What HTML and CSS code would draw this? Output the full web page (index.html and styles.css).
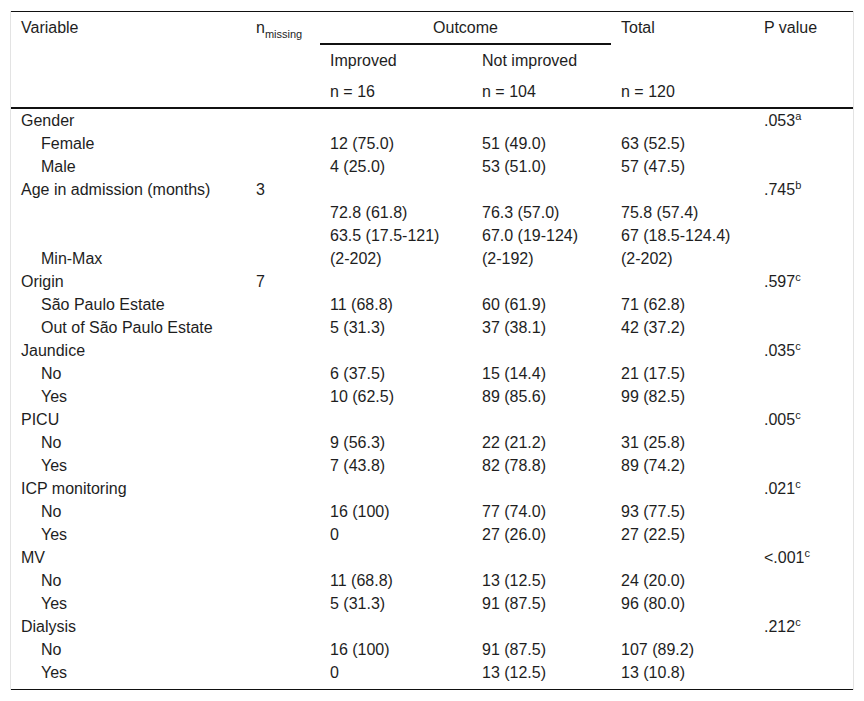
FILE: index.html
```html
<!DOCTYPE html>
<html lang="en">
<head>
<meta charset="utf-8">
<title>Table</title>
<link rel="stylesheet" href="styles.css">
</head>
<body>
<div class="wrap">
<table class="tbl">
  <colgroup>
    <col class="c-var"><col class="c-miss"><col class="c-imp"><col class="c-not"><col class="c-tot"><col class="c-p">
  </colgroup>
  <thead>
    <tr>
      <th rowspan="3">Variable</th>
      <th rowspan="3">n<sub>missing</sub></th>
      <th colspan="2" class="outcome">Outcome</th>
      <th rowspan="2">Total</th>
      <th rowspan="3">P value</th>
    </tr>
    <tr>
      <th>Improved</th>
      <th>Not improved</th>
    </tr>
    <tr class="last-head">
      <th>n = 16</th>
      <th>n = 104</th>
      <th>n = 120</th>
    </tr>
  </thead>
  <tbody>
    <tr><td>Gender</td><td></td><td></td><td></td><td></td><td>.053<sup>a</sup></td></tr>
    <tr><td class="ind">Female</td><td></td><td>12 (75.0)</td><td>51 (49.0)</td><td>63 (52.5)</td><td></td></tr>
    <tr><td class="ind">Male</td><td></td><td>4 (25.0)</td><td>53 (51.0)</td><td>57 (47.5)</td><td></td></tr>
    <tr><td>Age in admission (months)</td><td>3</td><td></td><td></td><td></td><td>.745<sup>b</sup></td></tr>
    <tr><td></td><td></td><td>72.8 (61.8)</td><td>76.3 (57.0)</td><td>75.8 (57.4)</td><td></td></tr>
    <tr><td></td><td></td><td>63.5 (17.5-121)</td><td>67.0 (19-124)</td><td>67 (18.5-124.4)</td><td></td></tr>
    <tr><td class="ind">Min-Max</td><td></td><td>(2-202)</td><td>(2-192)</td><td>(2-202)</td><td></td></tr>
    <tr><td>Origin</td><td>7</td><td></td><td></td><td></td><td>.597<sup>c</sup></td></tr>
    <tr><td class="ind">São Paulo Estate</td><td></td><td>11 (68.8)</td><td>60 (61.9)</td><td>71 (62.8)</td><td></td></tr>
    <tr><td class="ind">Out of São Paulo Estate</td><td></td><td>5 (31.3)</td><td>37 (38.1)</td><td>42 (37.2)</td><td></td></tr>
    <tr><td>Jaundice</td><td></td><td></td><td></td><td></td><td>.035<sup>c</sup></td></tr>
    <tr><td class="ind">No</td><td></td><td>6 (37.5)</td><td>15 (14.4)</td><td>21 (17.5)</td><td></td></tr>
    <tr><td class="ind">Yes</td><td></td><td>10 (62.5)</td><td>89 (85.6)</td><td>99 (82.5)</td><td></td></tr>
    <tr><td>PICU</td><td></td><td></td><td></td><td></td><td>.005<sup>c</sup></td></tr>
    <tr><td class="ind">No</td><td></td><td>9 (56.3)</td><td>22 (21.2)</td><td>31 (25.8)</td><td></td></tr>
    <tr><td class="ind">Yes</td><td></td><td>7 (43.8)</td><td>82 (78.8)</td><td>89 (74.2)</td><td></td></tr>
    <tr><td>ICP monitoring</td><td></td><td></td><td></td><td></td><td>.021<sup>c</sup></td></tr>
    <tr><td class="ind">No</td><td></td><td>16 (100)</td><td>77 (74.0)</td><td>93 (77.5)</td><td></td></tr>
    <tr><td class="ind">Yes</td><td></td><td>0</td><td>27 (26.0)</td><td>27 (22.5)</td><td></td></tr>
    <tr><td>MV</td><td></td><td></td><td></td><td></td><td>&lt;.001<sup>c</sup></td></tr>
    <tr><td class="ind">No</td><td></td><td>11 (68.8)</td><td>13 (12.5)</td><td>24 (20.0)</td><td></td></tr>
    <tr><td class="ind">Yes</td><td></td><td>5 (31.3)</td><td>91 (87.5)</td><td>96 (80.0)</td><td></td></tr>
    <tr><td>Dialysis</td><td></td><td></td><td></td><td></td><td>.212<sup>c</sup></td></tr>
    <tr><td class="ind">No</td><td></td><td>16 (100)</td><td>91 (87.5)</td><td>107 (89.2)</td><td></td></tr>
    <tr class="last"><td class="ind">Yes</td><td></td><td>0</td><td>13 (12.5)</td><td>13 (10.8)</td><td></td></tr>
  </tbody>
</table>
</div>
</body>
</html>
```

FILE: styles.css
```css
html, body {
  margin: 0;
  padding: 0;
  background: #fff;
}
body {
  padding: 11px 10px 10px;
  font-family: "Liberation Sans", Arial, sans-serif;
  font-size: 16px;
  color: #1e1e1e;
}
.wrap {
  border-left: 1px solid #e3e3e3;
  border-right: 1px solid #e3e3e3;
}
.tbl {
  width: 100%;
  border-collapse: separate;
  border-spacing: 0;
  table-layout: fixed;
  border-top: 1px solid #111;
  border-bottom: 1px solid #111;
}
.c-var { width: 235px; }
.c-miss { width: 74px; }
.c-imp { width: 152px; }
.c-not { width: 139px; }
.c-tot { width: 143px; }
.c-p { width: 99px; }

.tbl th {
  font-weight: normal;
  text-align: left;
  vertical-align: top;
  padding: 7px 10px;
  line-height: 17px;
  height: 17px;
  white-space: nowrap;
}
.tbl th.outcome {
  text-align: center;
  border-bottom: 2px solid #111;
}
.tbl thead th[rowspan="3"],
.tbl .last-head th {
  border-bottom: 2px solid #111;
}
.tbl td {
  padding: 0 10px;
  line-height: 23px;
  height: 23px;
  vertical-align: top;
  white-space: nowrap;
}
.tbl td.ind {
  padding-left: 30px;
}
.tbl tr.last td {
  padding-bottom: 5px;
}
sup {
  font-size: 11px;
  line-height: 0;
  vertical-align: 6px;
}
sub {
  font-size: 11px;
  line-height: 0;
  vertical-align: -5px;
}
```
